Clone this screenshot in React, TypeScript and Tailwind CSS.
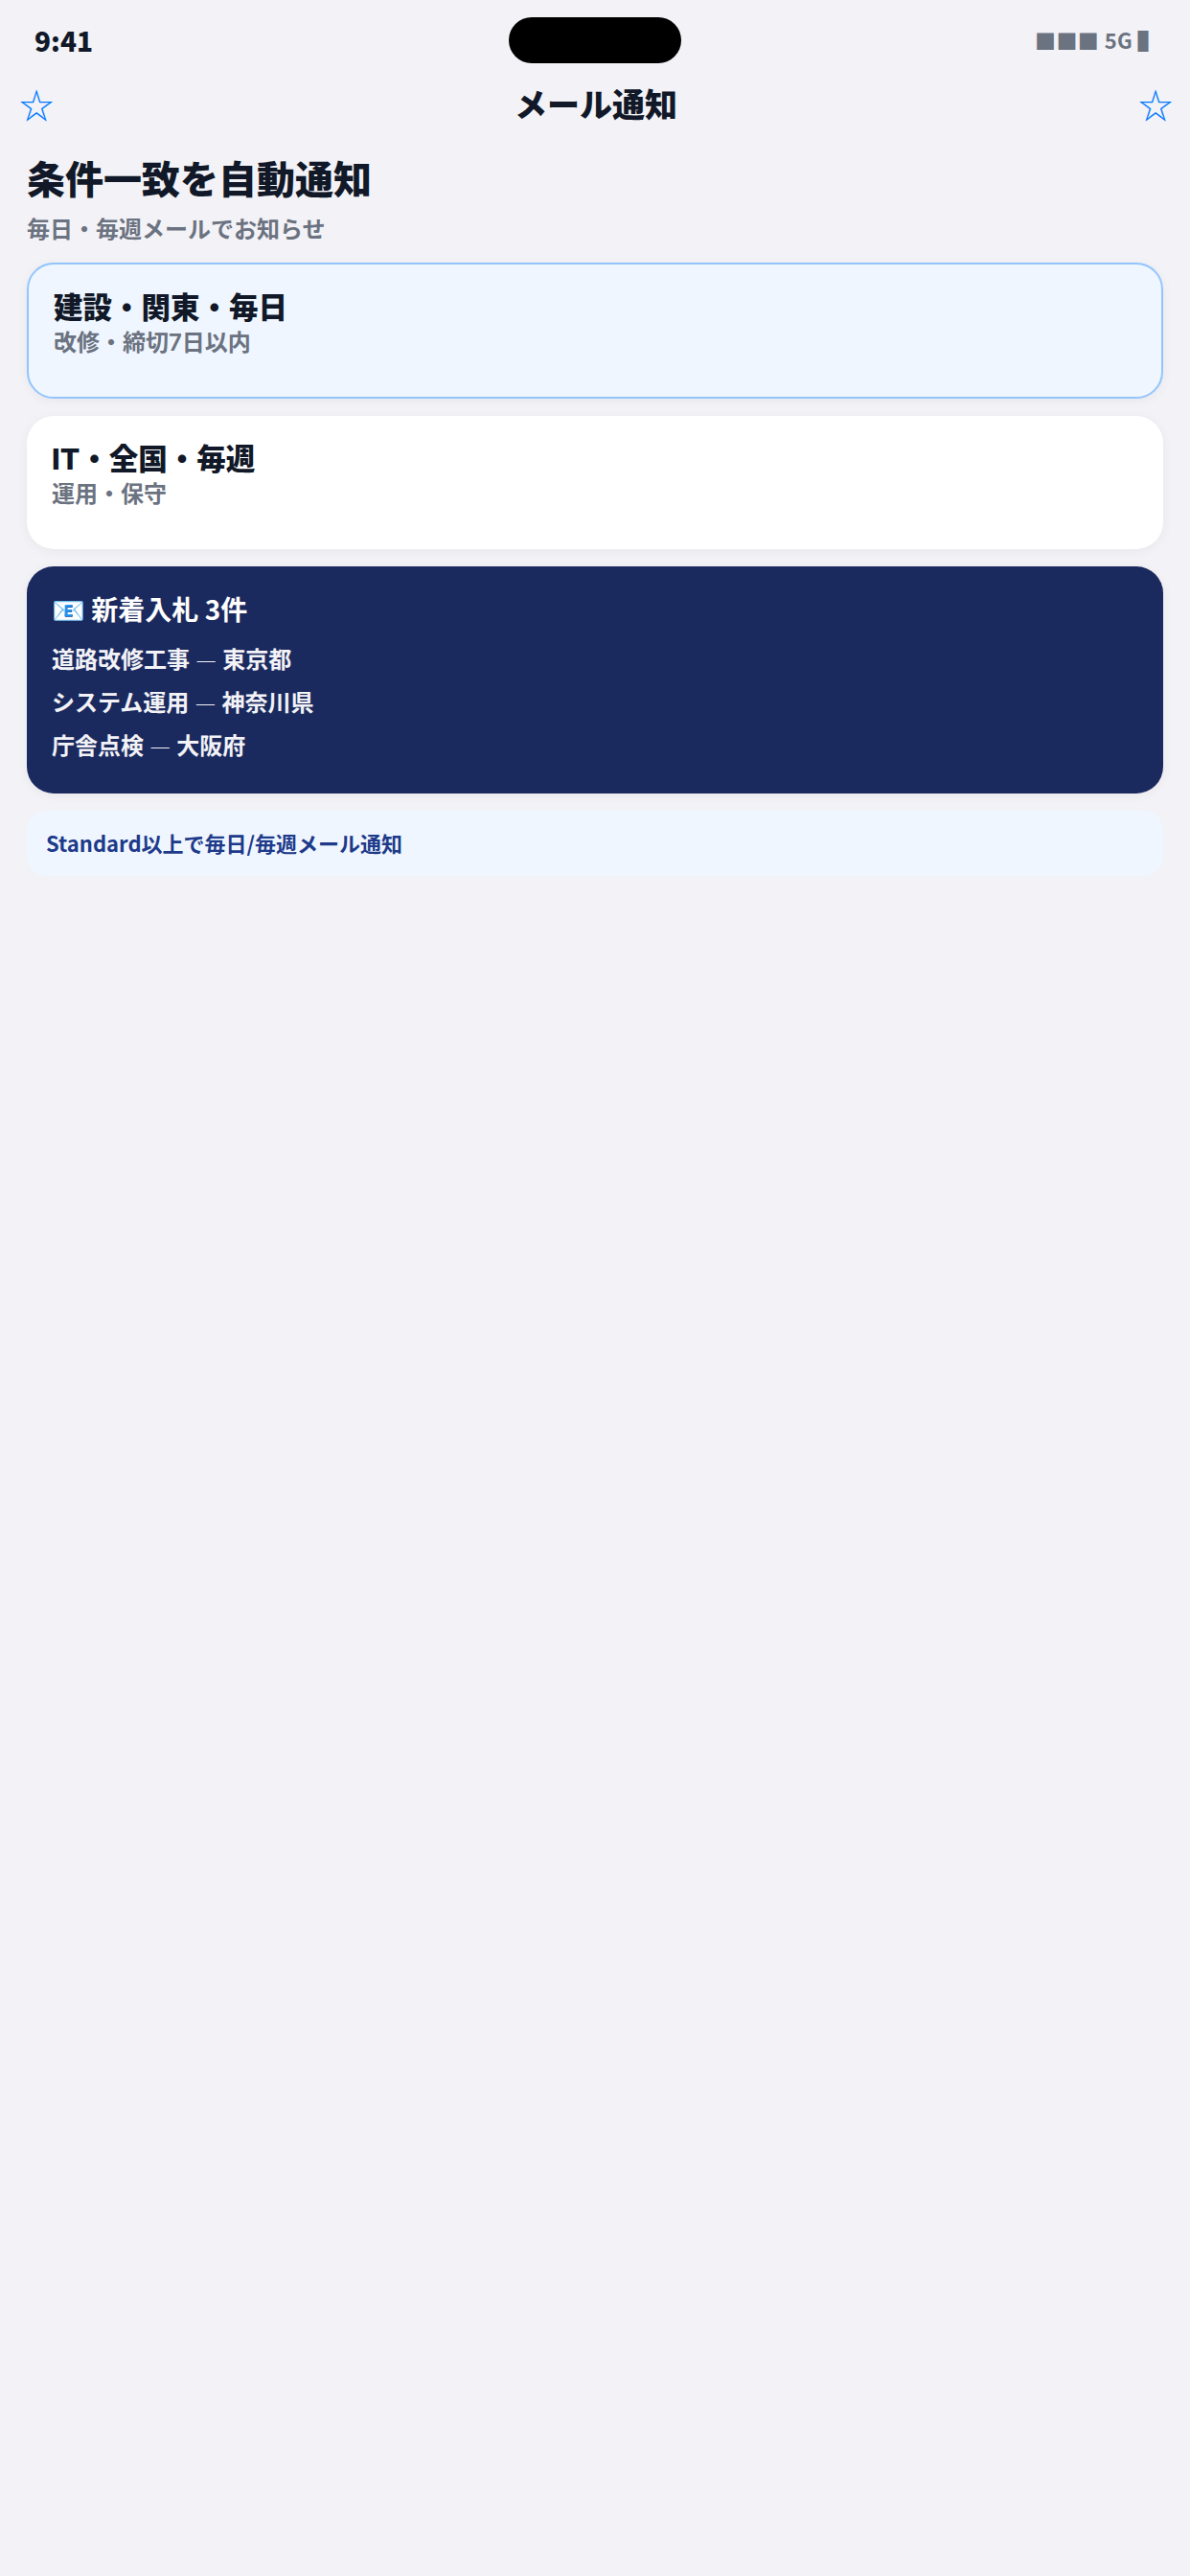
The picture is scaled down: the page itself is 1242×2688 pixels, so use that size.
const cardTitle = "text-[30.5px] leading-[40px] font-extrabold text-[#111827] font-['Inter','Noto_Sans_CJK_JP',sans-serif]";
const cardSub = "text-[24px] leading-[33px] font-semibold text-[#6b7280] font-['Inter','Noto_Sans_CJK_JP',sans-serif]";

function AlertCard({ title, sub, active }: { title: string; sub: string; active?: boolean }) {
    return (
        <div
            className={
                active
                    ? "h-[142px] rounded-[28px] border-2 border-[#93c5fd] bg-[#eff6ff] px-[26px] pt-[25px] shadow-[0_2px_12px_rgba(0,0,0,0.05)]"
                    : "h-[139px] rounded-[28px] bg-white px-[26px] pt-[25px] shadow-[0_2px_12px_rgba(0,0,0,0.05)]"
            }
        >
            <div className={cardTitle}>{title}</div>
            <div className={cardSub}>{sub}</div>
        </div>
    );
}

function BidRow({ name, place }: { name: string; place: string }) {
    return (
        <span>
            {name} <span className="px-[1px] font-light">—</span> {place}
        </span>
    );
}

export default function App() {
    return (
        <div
            className="relative min-h-[2688px] w-[1242px] bg-[#f2f2f7]"
            style={{ fontFamily: '"Noto Sans CJK JP", "Noto Sans", sans-serif' }}
        >
            <div className="absolute left-[531px] top-[18px] h-[48px] w-[180px] rounded-[24px] bg-black"></div>

            <div className="flex h-[83px] items-center justify-between pl-[36px] pr-[32px]">
                <span className="text-[28px] font-extrabold text-[#111827]">9:41</span>
                <span className="text-[22px] font-semibold tracking-[0.4px] text-[#6b7280]">■■■ 5G ▌</span>
            </div>

            <div className="flex h-[50px] items-center justify-between pl-[20px] pr-[18px]">
                <span className="text-[36px] leading-[50px] text-[#007aff]">☆</span>
                <h2 className="text-[34px] leading-[50px] font-extrabold text-[#111827]">メール通知</h2>
                <span className="text-[36px] leading-[50px] text-[#007aff]">☆</span>
            </div>

            <div className="px-[28px]">
                <h1 className="mt-[27px] text-[40px] leading-[50px] font-extrabold text-[#111827]">条件一致を自動通知</h1>
                <p className="mt-[10px] text-[24px] leading-[36px] font-semibold text-[#6b7280]">毎日・毎週メールでお知らせ</p>

                <div className="mt-[18px] flex flex-col gap-[18px]">
                    <AlertCard title="建設・関東・毎日" sub="改修・締切7日以内" active />
                    <AlertCard title="IT・全国・毎週" sub="運用・保守" />

                    <div className="h-[237px] rounded-[28px] bg-[#1b2a5e] px-[26px] pt-[24px] text-white shadow-[0_2px_12px_rgba(0,0,0,0.05)]">
                        <div className="text-[28px] leading-[40px] font-bold">📧 新着入札 3件</div>
                        <div className="mt-[9px] flex flex-col text-[24px] leading-[45px] font-semibold text-[#f2f2f7]">
                            <BidRow name="道路改修工事" place="東京都" />
                            <BidRow name="システム運用" place="神奈川県" />
                            <BidRow name="庁舎点検" place="大阪府" />
                        </div>
                    </div>

                    <div className="flex h-[68px] items-center rounded-[20px] bg-[#eff6ff] px-[20px] pb-[2px]">
                        <span className="text-[22px] font-semibold text-[#1e3a8a]">Standard以上で毎日/毎週メール通知</span>
                    </div>
                </div>
            </div>
        </div>
    );
}
